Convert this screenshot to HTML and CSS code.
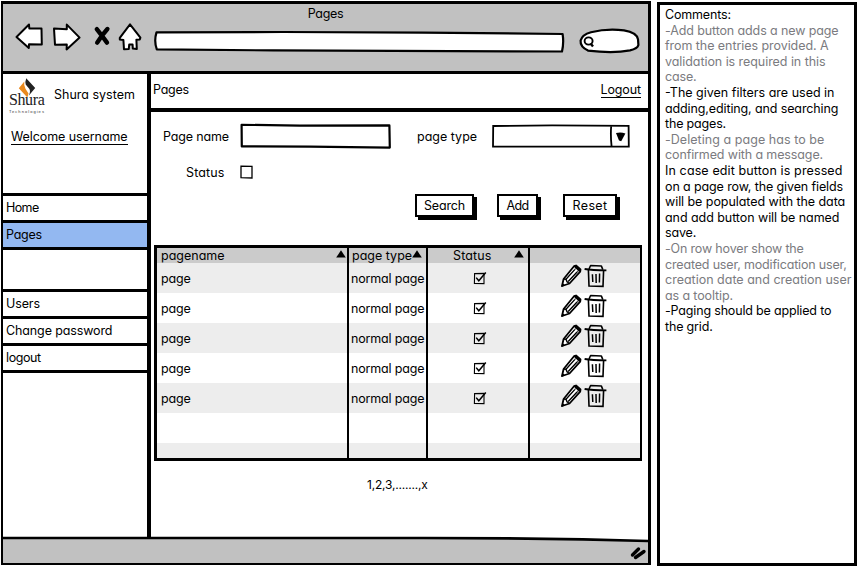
FILE: index.html
```html
<!DOCTYPE html>
<html lang="en">
<head>
<meta charset="utf-8">
<title>Pages</title>
<link rel="stylesheet" href="styles.css">
</head>
<body>
<svg class="defs" width="0" height="0">
  <symbol id="pencil" viewBox="0 0 22 24">
    <path d="M2 22 L3.6 15 L14 2.2 L16 1.5 L20.5 5.5 L20.2 7.6 L9.5 19.5 Z" fill="#fff" stroke="#000" stroke-width="1.8" stroke-linejoin="round"/>
    <path d="M3.6 15 L6 15.2 L7 17.8 L9.5 19.5 M6.2 15 L15.6 4.6 M8.2 17.5 L18 7" fill="none" stroke="#000" stroke-width="1.4"/>
    <path d="M1.4 23 L2.4 18.8 L5.2 21.4 Z M13.6 2.6 L16 1 L20.8 5.6 L19.4 8 Z"/>
    <path d="M14.5 5 L17.6 8" stroke="#fff" stroke-width=".8"/>
  </symbol>
  <symbol id="trash" viewBox="0 0 23 24">
    <path d="M4.4 6 L5 22 L19 22.4 L19.6 6.4" fill="none" stroke="#000" stroke-width="1.6"/>
    <path d="M.6 5 Q8 6.4 22.4 6.4" fill="none" stroke="#000" stroke-width="1.8"/>
    <path d="M5 5 L6.6 1.5 L17.4 2 L18.8 5.6" fill="none" stroke="#000" stroke-width="1.6" stroke-linejoin="round"/>
    <path d="M8.4 10.2 L8.8 18 M12 10 L12.2 19 M15.6 9.6 L15.4 18.4" stroke="#000" stroke-width="1.5"/>
  </symbol>
  <symbol id="checked" viewBox="0 0 14 14">
    <path d="M1.6 2.6 L11 2.4 L11 12.6 L1.4 12.5 Z" fill="none" stroke="#000" stroke-width="1.1"/>
    <path d="M3.2 6.6 L5.8 9.8 L12.8 1.6" fill="none" stroke="#000" stroke-width="1.5"/>
  </symbol>
  <symbol id="sort" viewBox="0 0 10 8"><path d="M5 .2 L9.8 7.6 L.2 7.6 Z"/></symbol>
</svg>

<div class="board">
  <div class="window">
    <header class="chrome">
      <div class="title n4">Pages</div>
      <div class="toolbar">
        <svg class="ic-back" viewBox="0 0 28 28"><path d="M1.5 14 L14 1.5 L14.3 5.5 L26.5 5.6 L26.8 21.5 L14 21.2 L13.8 25 Z" fill="#fff" stroke="#000" stroke-width="2" stroke-linejoin="round"/></svg>
        <svg class="ic-fwd" viewBox="0 0 29 28"><path d="M2 5.6 L14.8 6.2 L14.8 1.6 L27.6 14.6 L14.6 26.4 L14.8 21.6 L3 21.8 Z" fill="#fff" stroke="#000" stroke-width="2" stroke-linejoin="round"/></svg>
        <svg class="ic-stop" viewBox="0 0 18 20"><path d="M3.8 3.2 Q8.4 9 14 16.6 M14.4 3 Q9 9 4.2 16.6" fill="none" stroke="#000" stroke-width="4.4" stroke-linecap="round"/></svg>
        <svg class="ic-home" viewBox="0 0 24 28"><path d="M12 1.4 L22.4 14.6 L21.8 16.4 L18.4 16.8 L18.8 26 L14.8 25.4 L14.6 21.6 L11.2 21.6 L10.8 26 L6 26.2 L5.4 17 L1.8 16.4 L1.8 14.8 Z" fill="#fff" stroke="#000" stroke-width="2" stroke-linejoin="round"/></svg>
        <svg class="address" viewBox="0 0 413 24"><path d="M3.5 2.4 L130 2 L270 2.6 L409.6 4 Q411 13 409 21.5 L240 20.9 L120 20.4 L3.8 19.4 Q.8 11 3.5 2.4 Z" fill="#fff" stroke="#000" stroke-width="2.2" stroke-linejoin="round"/></svg>
        <svg class="find" viewBox="0 0 61 26"><path d="M9 22.6 Q1 18.6 1.6 12.6 Q3 6.6 12 4.2 Q28 .4 45 2.4 Q58 4.6 59 11.4 L59.4 17 Q58.6 20.6 51 22.4 Q34 25.6 9 22.6 Z" fill="#fff" stroke="#000" stroke-width="2.2"/><ellipse cx="9.6" cy="13" rx="4" ry="3.6" fill="none" stroke="#000" stroke-width="1.9"/><path d="M11.6 15.6 L14 18.6" stroke="#000" stroke-width="2.4"/></svg>
      </div>
    </header>

    <div class="body">
      <aside class="side">
        <div class="brand">
          <svg class="mark" viewBox="0 0 18 21"><path d="M6.2 3.6 L.4 10.8 L9.4 20.6 L10.6 16.4 L7.4 11.4 Q5.4 8 6.2 3.6 Z" fill="#e98a1f"/><path d="M8.2 .2 L17.6 10.6 L10.8 18.6 Q13 14.6 11.6 11.6 L7.6 6.8 Q6.8 4 8.2 .2 Z" fill="#222"/></svg>
          <div class="wordmark">Shura</div>
          <div class="tagline">Technologies</div>
        </div>
        <div class="product">Shura system</div>
        <a class="welcome">Welcome username</a>
        <nav class="menu">
          <a class="n6">Home</a>
          <a class="on n4">Pages</a>
          <span class="gap"></span>
          <a class="n2">Users</a>
          <a class="n2">Change password</a>
          <a class="n5">logout</a>
        </nav>
      </aside>

      <main class="main">
        <div class="head"><span class="n4">Pages</span><a class="n2">Logout</a></div>
        <div class="form">
          <label class="name n3">Page name</label>
          <svg class="input" viewBox="0 0 151 27"><path d="M1.6 1.8 L60 2.6 L149.4 2.4 L149.8 24.6 L70 23.6 L1.8 23.4 Z" fill="#fff" stroke="#000" stroke-width="2.2" stroke-linejoin="round"/></svg>
          <label class="type">page type</label>
          <svg class="select" viewBox="0 0 138 24"><path d="M1.2 2 L60 1.4 L136.6 1.8 L136.8 22.6 L1 22.6 Z M119.2 1.8 Q118.4 12 119.6 22.4" fill="#fff" stroke="#000" stroke-width="1.8"/><path d="M124 9 Q129 8 133.4 9.4 L129.2 17.2 L127 16.4 Z"/></svg>
        </div>
        <div class="status">
          <label class="p1">Status</label>
          <svg class="box" viewBox="0 0 13 14"><path d="M1 1.2 L12 1.4 L12 13 L1 12.6 Z" fill="#fff" stroke="#000" stroke-width="1.3"/></svg>
        </div>
        <div class="actions">
          <button class="search n3">Search</button>
          <button class="add n6">Add</button>
          <button class="reset p3">Reset</button>
        </div>

        <div class="grid">
          <div class="row hd">
            <div>pagename<svg class="sort"><use href="#sort"/></svg></div>
            <div class="ty"><span>page type</span><svg class="sort"><use href="#sort"/></svg></div>
            <div class="st"><span class="p1">Status</span><svg class="sort"><use href="#sort"/></svg></div>
            <div></div>
          </div>
          <div class="row"><div class="n3">page</div><div class="n3">normal page</div><div class="ck"><svg><use href="#checked"/></svg></div><div class="ops"><svg class="pen"><use href="#pencil"/></svg><svg class="bin"><use href="#trash"/></svg></div></div>
          <div class="row"><div class="n3">page</div><div class="n3">normal page</div><div class="ck"><svg><use href="#checked"/></svg></div><div class="ops"><svg class="pen"><use href="#pencil"/></svg><svg class="bin"><use href="#trash"/></svg></div></div>
          <div class="row"><div class="n3">page</div><div class="n3">normal page</div><div class="ck"><svg><use href="#checked"/></svg></div><div class="ops"><svg class="pen"><use href="#pencil"/></svg><svg class="bin"><use href="#trash"/></svg></div></div>
          <div class="row"><div class="n3">page</div><div class="n3">normal page</div><div class="ck"><svg><use href="#checked"/></svg></div><div class="ops"><svg class="pen"><use href="#pencil"/></svg><svg class="bin"><use href="#trash"/></svg></div></div>
          <div class="row"><div class="n3">page</div><div class="n3">normal page</div><div class="ck"><svg><use href="#checked"/></svg></div><div class="ops"><svg class="pen"><use href="#pencil"/></svg><svg class="bin"><use href="#trash"/></svg></div></div>
          <div class="row"><div></div><div></div><div></div><div></div></div>
          <div class="row last"><div></div><div></div><div></div><div></div></div>
        </div>
        <div class="pager">1,2,3,.......,x</div>
      </main>
    </div>
    <svg class="foot" viewBox="0 0 645 27" preserveAspectRatio="none"><path d="M-2 2 L420 2 Q500 2 580 3.4 L648 5 L648 30 L-2 30 Z" fill="#c1c1c1" stroke="#000" stroke-width="2.6"/><path d="M629.5 19 L635.5 13 M632.5 21.5 L641 15.5" stroke="#000" stroke-width="3.4" stroke-linecap="round"/></svg>
  </div>

  <aside class="notes">
    <p class="n3">Comments:</p>
    <p class="dim n2">-Add button adds a new page</p>
    <p class="dim n1">from the entries provided. A</p>
    <p class="dim n1">validation is required in this</p>
    <p class="dim n3">case.</p>
    <p>-The given filters are used in</p>
    <p class="n2">adding,editing, and searching</p>
    <p class="n3">the pages.</p>
    <p class="dim p0">-Deleting a page has to be</p>
    <p class="dim n2">confirmed with a message.</p>
    <p class="p1">In case edit button is pressed</p>
    <p class="n2">on a page row, the given fields</p>
    <p class="n1">will be populated with the data</p>
    <p class="n1">and add button will be named</p>
    <p class="n3">save.</p>
    <p class="dim n3">-On row hover show the</p>
    <p class="dim n3">created user, modification user,</p>
    <p class="dim">creation date and creation user</p>
    <p class="dim n2">as a tooltip.</p>
    <p class="n3">-Paging should be applied to</p>
    <p class="n3">the grid.</p>
  </aside>
</div>
</body>
</html>
```
FILE: styles.css
```css
* { box-sizing: border-box; }
body {
  margin: 0;
  background: #fff;
  color: #000;
  font: 12.5px/16px Inter, "Liberation Sans", sans-serif;
  font-feature-settings: "cv11";
  overflow: hidden;
}
svg { display: block; flex: none; overflow: visible; }
.defs { display: none; }
p { margin: 0; }

/* tracking steps */
.p0 { letter-spacing: .05px; }
.p1 { letter-spacing: .12px; }
.p3 { letter-spacing: .35px; }
.n1 { letter-spacing: -.06px; }
.n2 { letter-spacing: -.12px; }
.n3 { letter-spacing: -.17px; }
.n4 { letter-spacing: -.28px; }
.n5 { letter-spacing: -.4px; }
.n6 { letter-spacing: -.6px; }

.board { display: flex; gap: 6px; width: 857px; height: 566px; padding-top: 1px; }

.window {
  width: 650px;
  height: 564px;
  display: flex;
  flex-direction: column;
  border: 3px solid #000;
  border-left-width: 2px;
  margin-left: 1px;
}
.chrome {
  height: 70px;
  background: #c1c1c1;
  border-bottom: 3px solid #000;
  flex: none;
}
.title { text-align: center; height: 16px; padding-top: 2px; }
.toolbar { display: flex; align-items: flex-start; }
.ic-back { width: 28px; height: 28px; margin: 3px 0 0 12px; }
.ic-fwd { width: 29px; height: 28px; margin: 3px 0 0 9px; }
.ic-stop { width: 18px; height: 20px; margin: 6px 0 0 12px; }
.ic-home { width: 24px; height: 28px; margin: 3px 0 0 7px; }
.address { width: 413px; height: 24px; margin: 10px 0 0 11px; }
.find { width: 61px; height: 26px; margin: 8px 0 0 13px; }

.body { display: flex; height: 464px; flex: none; }
.side {
  width: 148px;
  border-right: 4px solid #000;
  flex: none;
  display: grid;
  grid-template-columns: 51px 1fr;
  grid-template-rows: 47px 72px auto;
}
.brand { width: 38px; margin: 4px 0 0 6px; }
.mark { width: 18px; height: 20px; margin-left: 9px; }
.wordmark { font: 16px/14px "Liberation Serif", serif; color: #222; letter-spacing: -.4px; margin-top: -5px; white-space: nowrap; }
.tagline { font: 4px/4px "Liberation Sans", sans-serif; letter-spacing: 1.05px; color: #333; white-space: nowrap; margin-top: 3px; }
.product { margin-top: 13px; white-space: nowrap; }
.welcome { grid-column: 1 / 3; justify-self: start; margin: 8px 0 0 8px; height: 16px; border-bottom: 1px solid #000; letter-spacing: -.08px; }
.menu { grid-column: 1 / 3; border-top: 3px solid #000; height: 180px; }
.menu a, .gap { display: block; height: 27px; padding: 4px 0 0 3px; border-bottom: 3px solid #000; }
.menu .gap { height: 42px; }
.menu .on { background: #93b8f1; }

.main { flex: 1; }
.head { height: 38px; display: flex; justify-content: space-between; padding: 8px 7px 0 2px; border-bottom: 4px solid #000; }
.head a { height: 16px; border-bottom: 1px solid #000; }
.form { display: flex; height: 38px; align-items: flex-start; margin-top: 11px; }
.form label { padding-top: 6px; white-space: nowrap; }
.name { width: 77px; margin-left: 12px; }
.input { width: 151px; height: 27px; }
.type { width: 75px; margin-left: 26px; }
.select { width: 138px; height: 24px; margin-top: 1px; }
.status { display: flex; height: 33px; margin-left: 35px; }
.status label { width: 54px; padding-top: 4px; }
.box { width: 13px; height: 14px; margin-top: 4px; }
.actions { display: flex; height: 27px; margin-left: 264px; }
button {
  height: 23px;
  padding: 0;
  border: 2px solid #000;
  background: #fff;
  color: #000;
  box-shadow: 3px 3px 0 #000;
  font-family: inherit;
  font-size: inherit;
  line-height: 16px;
  font-feature-settings: inherit;
}
.search { width: 59px; }
.add { width: 41px; margin-left: 23px; }
.reset { width: 54px; margin-left: 25px; }

.grid { width: 488px; height: 216px; margin: 24px 0 0 3px; border: 3px solid #000; border-right-width: 2px; }
.row { display: grid; grid-template-columns: 192px 79px 102px 1fr; height: 30px; }
.row > div { border-right: 2px solid #000; white-space: nowrap; padding: 8px 0 0 2px; }
.row > div:first-child { padding-left: 4px; }
.row > div:last-child { border-right: 0; }
.row:nth-child(even) { background: #ededed; }
.row.hd { height: 15px; background: #cbcbcb; }
.row.hd > div { display: flex; justify-content: space-between; padding-top: 0; line-height: 15px; }
.sort { width: 10px; height: 8px; margin: 2px 1px 0 0; }
.row.hd > .ty { padding-left: 3px; }
.ty .sort { margin-right: 4px; }
.row.hd > .st { padding-left: 25px; }
.st .sort { margin-right: 4px; }
.row.last { height: 15px; }
.row > .ck { padding: 8px 0 0 45px; }
.ck svg { width: 14px; height: 14px; }
.row > .ops { display: flex; gap: 2px; padding: 1px 0 0 30px; }
.pen { width: 22px; height: 24px; }
.bin { width: 23px; height: 24px; }
.pager { margin: 16px 0 0 216px; font: 12px/16px Inter, sans-serif; letter-spacing: -.2px; }
.foot { width: 645px; height: 27px; margin-top: -2px; overflow: hidden; }

.notes {
  width: 200px;
  height: 564px;
  margin-top: 1px;
  border: 3px solid #000;
  padding: 2px 0 0 5px;
  line-height: 15.6px;
  white-space: nowrap;
}
.dim { color: #7b7b80; }
```
